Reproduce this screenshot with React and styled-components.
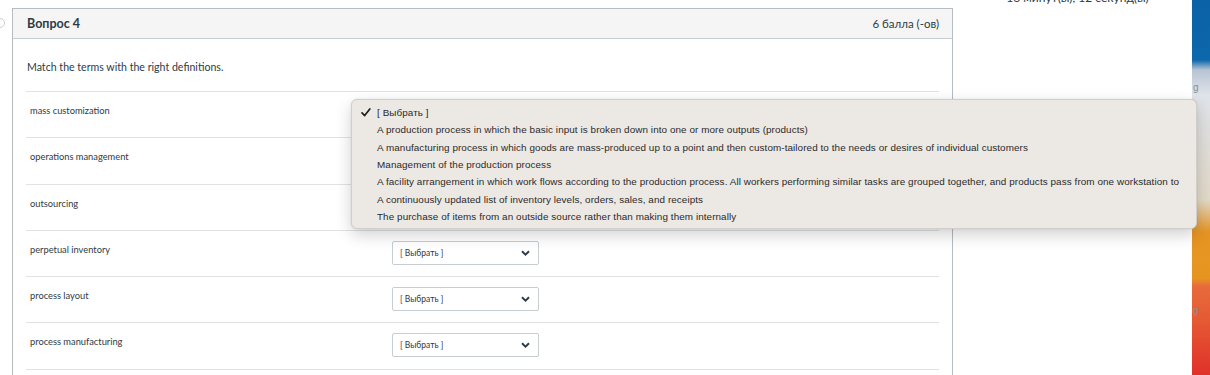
import React from 'react';
import styled, { createGlobalStyle } from 'styled-components';

const GlobalStyle = createGlobalStyle`
  html, body {
    margin: 0;
    padding: 0;
    background: #fff;
    overflow: hidden;
  }
  body {
    font-family: Lato, "Noto Sans", sans-serif;
    color: #2d3b45;
  }
`;

const Screen = styled.div`
  display: flex;
  width: 1210px;
  height: 375px;
  overflow: hidden;
`;

const Page = styled.div`
  position: relative;
  flex: 1;
  display: flex;
  align-items: flex-start;
  background: #fff;
`;

const Gutter = styled.div`
  width: 12px;
  flex: none;
  padding-top: 18px;
`;

const FlagRing = styled.div`
  width: 10px;
  height: 10px;
  margin-left: -5px;
  border-radius: 50%;
  border: 1px solid #c8cdd2;
  box-sizing: border-box;
`;

const Card = styled.section`
  width: 941px;
  margin-top: 8px;
  flex: none;
  border: 1px solid #b5bcc2;
  box-sizing: border-box;
  height: 400px;
`;

const CardHeader = styled.header`
  display: flex;
  align-items: center;
  justify-content: space-between;
  height: 29px;
  padding: 0 13px 0 14px;
  background: #f5f5f5;
  border-bottom: 1px solid #c7cdd1;
`;

const Title = styled.h2`
  margin: 0;
  font-size: 12.5px;
  font-weight: 700;
  color: #2d3b45;
`;

const Points = styled.span`
  font-size: 11.5px;
  color: #2d3b45;
`;

const CardBody = styled.div`
  padding: 0 13px;
`;

const Prompt = styled.p`
  margin: 0;
  padding: 22px 1px 18px;
  font-size: 10.6px;
  color: #2d3b45;
  border-bottom: 1px solid #dfe3e6;
`;

const Row = styled.div`
  display: flex;
  align-items: flex-start;
  height: 46.3px;
  box-sizing: border-box;
  border-bottom: 1px solid #dfe3e6;
`;

const Term = styled.div`
  width: 362px;
  padding: 13px 0 0 4px;
  font-size: 9.3px;
  color: #2d3b45;
`;

const SelectBox = styled.div`
  display: flex;
  align-items: center;
  justify-content: space-between;
  width: 147px;
  height: 24px;
  margin-top: 10px;
  padding: 0 8px 0 7px;
  box-sizing: border-box;
  border: 1px solid #c7cdd1;
  border-radius: 2px;
  background: #fff;
  font-size: 8.5px;
  color: #2d3b45;
`;

const Chevron = () => (
  <svg width="9" height="6" viewBox="0 0 9 6">
    <path d="M1 1.2 L4.5 4.6 L8 1.2" fill="none" stroke="#2d3b45" strokeWidth="1.9" />
  </svg>
);

const Sidebar = styled.aside`
  flex: 1;
  display: flex;
  justify-content: center;
  padding-left: 10px;
`;

const Timer = styled.div`
  margin-top: -10px;
  font-size: 12px;
  color: #2d3b45;
`;

const Wallpaper = styled.div`
  position: relative;
  width: 18px;
  flex: none;
  background: linear-gradient(
    180deg,
    #0b62a6 0px,
    #0d67ab 60px,
    #b8c4d4 70px,
    #dfe3ea 95px,
    #e2d9c8 200px,
    #e59424 232px,
    #e6961f 278px,
    #e86a3c 286px,
    #e55a33 320px,
    #e0302a 375px
  );
`;

const IconLabel = styled.span`
  display: block;
  height: 12px;
  margin-top: ${p => p.$top}px;
  padding-left: 1px;
  font-family: "Liberation Sans", sans-serif;
  font-size: 10px;
  line-height: 12px;
  color: #8a8f96;
`;

const Menu = styled.div`
  position: absolute;
  left: 351px;
  top: 99px;
  width: 846px;
  height: 130px;
  box-sizing: border-box;
  padding: 4px 0 0 9px;
  background: #ece8e3;
  border: 1px solid #d2cec9;
  border-radius: 6px;
  box-shadow: 0 6px 16px rgba(0, 0, 0, 0.18), 0 0 2px rgba(0, 0, 0, 0.1);
  overflow: hidden;
  z-index: 10;
`;

const MenuItem = styled.div`
  display: flex;
  align-items: center;
  height: 17.3px;
  font-family: "Liberation Sans", Arial, sans-serif;
  font-size: 9.9px;
  letter-spacing: 0.08px;
  color: #2a2a2a;
  white-space: nowrap;
`;

const CheckSlot = styled.span`
  display: inline-flex;
  width: 16px;
  flex: none;
`;

const Check = () => (
  <svg width="10" height="9" viewBox="0 0 10 9">
    <path d="M1 4.8 L3.7 7.6 L8.8 1" fill="none" stroke="#1e1e1e" strokeWidth="1.7" strokeLinecap="round" strokeLinejoin="round" />
  </svg>
);

const terms = [
  'mass customization',
  'operations management',
  'outsourcing',
  'perpetual inventory',
  'process layout',
  'process manufacturing',
];

const options = [
  '[ Выбрать ]',
  'A production process in which the basic input is broken down into one or more outputs (products)',
  'A manufacturing process in which goods are mass-produced up to a point and then custom-tailored to the needs or desires of individual customers',
  'Management of the production process',
  'A facility arrangement in which work flows according to the production process. All workers performing similar tasks are grouped together, and products pass from one workstation to',
  'A continuously updated list of inventory levels, orders, sales, and receipts',
  'The purchase of items from an outside source rather than making them internally',
];

export default function App() {
  return (
    <>
      <GlobalStyle />
      <Screen>
        <Page>
          <Gutter>
            <FlagRing />
          </Gutter>
          <Card>
            <CardHeader>
              <Title>Вопрос 4</Title>
              <Points>6 балла (-ов)</Points>
            </CardHeader>
            <CardBody>
              <Prompt>Match the terms with the right definitions.</Prompt>
              {terms.map(term => (
                <Row key={term}>
                  <Term>{term}</Term>
                  <SelectBox>
                    <span>[ Выбрать ]</span>
                    <Chevron />
                  </SelectBox>
                </Row>
              ))}
            </CardBody>
          </Card>
          <Sidebar>
            <Timer>16 минут(ы), 12 секунд(ы)</Timer>
          </Sidebar>
          <Menu>
            {options.map((opt, i) => (
              <MenuItem key={opt}>
                <CheckSlot>{i === 0 && <Check />}</CheckSlot>
                {opt}
              </MenuItem>
            ))}
          </Menu>
        </Page>
        <Wallpaper>
          <IconLabel $top={82}>g</IconLabel>
          <IconLabel $top={211}>g</IconLabel>
        </Wallpaper>
      </Screen>
    </>
  );
}
